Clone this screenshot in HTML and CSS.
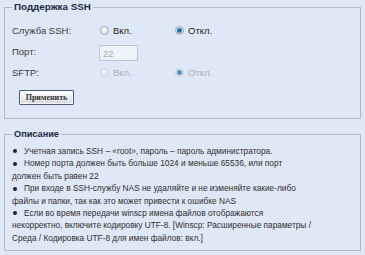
FILE: index.html
```html
<!DOCTYPE html>
<html lang="ru">
<head>
<meta charset="utf-8">
<title>Поддержка SSH</title>
<link rel="stylesheet" href="styles.css">
</head>
<body>
<fieldset class="fs fs-ssh">
  <legend class="legend">Поддержка SSH</legend>
  <div class="form">
    <div class="lbl">Служба SSH:</div>
    <div class="opts">
      <span class="opt"><span class="radio"></span>Вкл.</span>
      <span class="opt"><span class="radio on"></span>Откл.</span>
    </div>
    <div class="lbl">Порт:</div>
    <div class="field"><span class="input">22</span></div>
    <div class="lbl">SFTP:</div>
    <div class="opts dis">
      <span class="opt"><span class="radio"></span>Вкл.</span>
      <span class="opt"><span class="radio on"></span>Откл.</span>
    </div>
  </div>
  <button class="btn" type="button">Применить</button>
</fieldset>
<fieldset class="fs fs-desc">
  <legend class="legend legend-sm">Описание</legend>
  <ul class="notes">
    <li>Учетная запись SSH – «root», пароль – пароль администратора.</li>
    <li>Номер порта должен быть больше 1024 и меньше 65536, или порт<br>должен быть равен 22</li>
    <li>При входе в SSH-службу NAS не удаляйте и не изменяйте какие-либо<br>файлы и папки, так как это может привести к ошибке NAS</li>
    <li>Если во время передачи winscp имена файлов отображаются<br>некорректно, включите кодировку UTF-8. [Winscp: Расширенные параметры /<br>Среда / Кодировка UTF-8 для имен файлов: вкл.]</li>
  </ul>
</fieldset>
</body>
</html>
```
FILE: styles.css
```css
html, body {
  margin: 0;
  padding: 0;
  background: #dfe8f6;
}
body {
  font-family: "Liberation Sans", Arial, sans-serif;
  font-size: 9.5px;
  color: #2b2b2b;
}
.fs {
  margin: 0 4px;
  border: 1px solid #b5b8c8;
  padding: 6px 7px 13px 7px;
  min-width: 0;
}
.legend {
  padding: 0 2px;
  font-weight: bold;
  font-size: 9.8px;
  line-height: 14px;
  color: #1c2b3f;
}
.legend-sm {
  font-size: 9.2px;
}
.form {
  display: grid;
  grid-template-columns: 87px 1fr;
  grid-auto-rows: 21px;
  align-items: center;
}
.lbl {
  color: #3a3a3a;
}
.opts {
  display: flex;
  align-items: center;
  padding-left: 1px;
}
.opt {
  display: flex;
  align-items: center;
  gap: 4px;
  width: 75px;
  color: #222;
}
.radio {
  width: 7px;
  height: 7px;
  border-radius: 50%;
  border: 1px solid #9ea6ae;
  background: radial-gradient(circle at 40% 35%, #ffffff 0, #e3e6ea 60%, #c9ced4 100%);
  flex: none;
}
.radio.on {
  background: radial-gradient(circle at 50% 50%, #1d6fb8 0, #1d6fb8 30%, #5a8fbf 45%, #dfe3e8 60%, #c9ced4 100%);
}
.opts.dis .opt {
  color: #a9afb6;
}
.opts.dis .radio {
  border-color: #c4c9cf;
  opacity: 0.75;
}
.field {
  padding-top: 2px;
}
.input {
  display: block;
  box-sizing: border-box;
  width: 39px;
  height: 16px;
  border: 1px solid #bcc6d2;
  background: #eef3fa;
  color: #a8b0b8;
  padding: 2px 3px;
  line-height: 11px;
}
.btn {
  display: block;
  margin: 7px 0 0 7px;
  width: 55px;
  height: 15px;
  padding: 0;
  border: 1px solid #4c5d73;
  border-radius: 1px;
  background: linear-gradient(#ffffff, #e9ecf0 55%, #d3d8de);
  font-family: "Liberation Serif", "DejaVu Serif", serif;
  font-size: 8px;
  font-weight: bold;
  color: #333;
  line-height: 13px;
  box-shadow: inset 0 0 0 1px #f6f8fa;
}
.fs-desc {
  margin-top: 8px;
  padding: 4px 7px 6px 7px;
}
.notes {
  list-style: none;
  margin: 0;
  padding: 0;
  white-space: nowrap;
  font-size: 8.3px;
  line-height: 12.4px;
  color: #2f2f2f;
}
.notes li::before {
  content: "";
  display: inline-block;
  width: 4px;
  height: 4px;
  border-radius: 50%;
  background: #222;
  margin: 0 7px 1px 1px;
  vertical-align: middle;
}
```
